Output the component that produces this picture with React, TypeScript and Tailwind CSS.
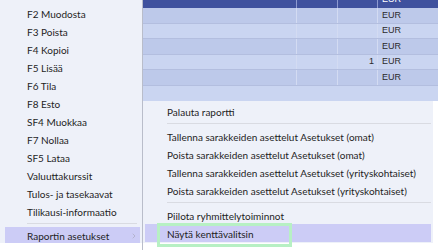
import { ChevronRight } from "lucide-react";

const leftItems = [
  "F2 Muodosta",
  "F3 Poista",
  "F4 Kopioi",
  "F5 Lisää",
  "F6 Tila",
  "F8 Esto",
  "SF4 Muokkaa",
  "F7 Nollaa",
  "SF5 Lataa",
  "Valuuttakurssit",
  "Tulos- ja tasekaavat",
  "Tilikausi-informaatio",
];

const rows = [
  { qty: "", cur: "EUR" },
  { qty: "", cur: "EUR" },
  { qty: "", cur: "EUR" },
  { qty: "1", cur: "EUR" },
  { qty: "", cur: "EUR" },
];

const subItems = [
  "Tallenna sarakkeiden asettelut Asetukset (omat)",
  "Poista sarakkeiden asettelut Asetukset (omat)",
  "Tallenna sarakkeiden asettelut Asetukset (yrityskohtaiset)",
  "Poista sarakkeiden asettelut Asetukset (yrityskohtaiset)",
];

const menuFont =
  "font-['Lato',sans-serif] text-[10px] text-[#1e1e1e] whitespace-nowrap";

const Separator = ({ left }: { left: string }) => (
  <div className={`h-[7px] flex items-center pr-[2px] ${left}`}>
    <div className="h-px w-full bg-[#d9dbe2]" />
  </div>
);

const App = () => {
  return (
    <div className="w-[438px] h-[250px] bg-white flex overflow-hidden">
      {/* LEFT MENU */}
      <div className={`w-[142px] h-[243px] bg-[#eef1f9] pt-[4px] ${menuFont}`}>
        {leftItems.map((item) => (
          <div key={item} className="h-[18px] flex items-center pl-[27px] pt-[3px]">
            {item}
          </div>
        ))}
        <Separator left="pl-[27px] pr-[5px]" />
        <div className="h-[16px] mx-[5px] mr-[2px] bg-[#ccccf6] flex items-center pl-[22px] pr-[2px] pt-[2px] justify-between">
          <span>Raportin asetukset</span>
          <ChevronRight size={8} strokeWidth={1.5} className="text-[#9a9aa8]" />
        </div>
      </div>

      <div className="flex-1 flex flex-col border-l border-[#b9bdca]">
        {/* GRID */}
        <div className="h-[101px] overflow-hidden flex flex-col font-['Liberation_Sans',Arial,sans-serif] text-[9px] text-[#2a2a2a]">
          <div className="h-[16px] -mt-[8px] shrink-0 bg-[#3f519e] flex text-white">
            <div className="w-[154px] border-r border-[#8d9ad0]" />
            <div className="w-[41px] border-r border-[#8d9ad0]" />
            <div className="w-[40px] border-r border-[#8d9ad0]" />
            <div className="flex-1 flex items-center pl-[4px]">EUR</div>
          </div>
          {rows.map((r, i) => (
            <div
              key={i}
              className={`h-[15.6px] shrink-0 flex border-b border-[#b3bedf] ${
                i % 2 === 0 ? "bg-[#bdc9ea]" : "bg-[#cad5f1]"
              }`}
            >
              <div className="w-[154px] border-r border-[#d3dbf2]" />
              <div className="w-[41px] border-r border-[#d3dbf2]" />
              <div className="w-[40px] border-r border-[#d3dbf2] flex items-center justify-end pr-[3px]">
                {r.qty}
              </div>
              <div className="flex-1 flex items-center pl-[4px]">{r.cur}</div>
            </div>
          ))}
          <div className="flex-1 bg-[#cad5f1]" />
        </div>

        {/* SUBMENU */}
        <div className={`w-[290px] h-[142px] bg-[#eef1f9] pt-[1px] ${menuFont}`}>
          <div className="h-[18px] flex items-center pl-[24px] pt-[3px]">Palauta raportti</div>
          <Separator left="pl-[24px]" />
          {subItems.map((s) => (
            <div key={s} className="h-[18px] flex items-center pl-[24px] pt-[3px]">
              {s}
            </div>
          ))}
          <Separator left="pl-[24px]" />
          <div className="h-[18px] flex items-center pl-[24px] pt-[3px]">
            Piilota ryhmittelytoiminnot
          </div>
          <div className="relative h-[18px] mx-[2px] bg-[#ccccf6] flex items-center pl-[22px] pt-[3px]">
            Näytä kenttävalitsin
            <div className="absolute left-[12px] top-[-1px] w-[135px] h-[24px] border-[3px] border-[#b7f0c4]" />
          </div>
        </div>
      </div>
    </div>
  );
};

export default App;
